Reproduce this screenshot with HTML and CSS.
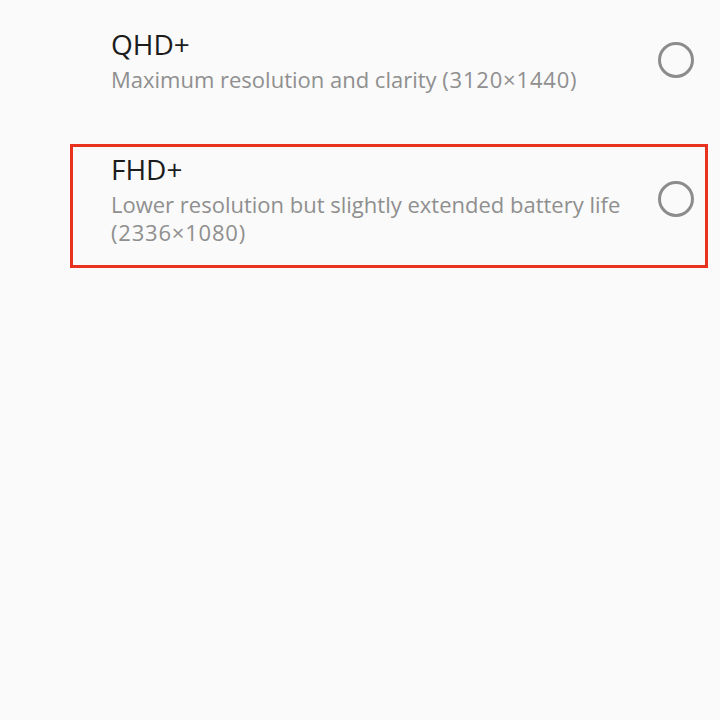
FILE: index.html
```html
<!DOCTYPE html>
<html>
  <head>
    <title>Screen resolution</title>
    <meta name="viewport" content="width=device-width, initial-scale=1.0" />
    <link rel="stylesheet" href="styles.css">
  </head>

  <body>
    <div class="option-list">
      <div class="option">
        <div class="option-text">
          <div class="option-title">QHD+</div>
          <div class="option-summary">Maximum resolution and clarity <span class="dims">(3120×1440)</span></div>
        </div>
        <div class="radio"></div>
      </div>
      <div class="option highlighted">
        <div class="option-text">
          <div class="option-title">FHD+</div>
          <div class="option-summary">Lower resolution but slightly extended battery life <span class="dims">(2336×1080)</span></div>
        </div>
        <div class="radio"></div>
      </div>
    </div>
  </body>
</html>
```

FILE: styles.css
```css
* {
  box-sizing: border-box;
}
html,
body {
  margin: 0;
  height: 100%;
  background: #fafafa;
}
body {
  font-family: "Open Sans", sans-serif;
}
.option-list {
  display: flex;
  flex-direction: column;
  padding-top: 26px;
}
.option {
  display: flex;
  align-items: center;
  padding: 0 26px 0 111px;
}
.option-text {
  flex: 1;
}
.option-title {
  font-size: 28px;
  line-height: 36px;
  color: #1c1c1c;
}
.option-summary {
  margin-top: 3px;
  font-size: 22px;
  line-height: 28px;
  color: #8f8f8f;
  max-width: 520px;
}
.dims {
  letter-spacing: 0.8px;
}
.radio {
  flex: none;
  width: 36px;
  height: 36px;
  border: 3px solid #8c8c8c;
  border-radius: 50%;
}
.highlighted {
  margin: 51px 12px 0 70px;
  padding: 4px 11px 19px 38px;
  border: 3px solid #e8321e;
}
```
